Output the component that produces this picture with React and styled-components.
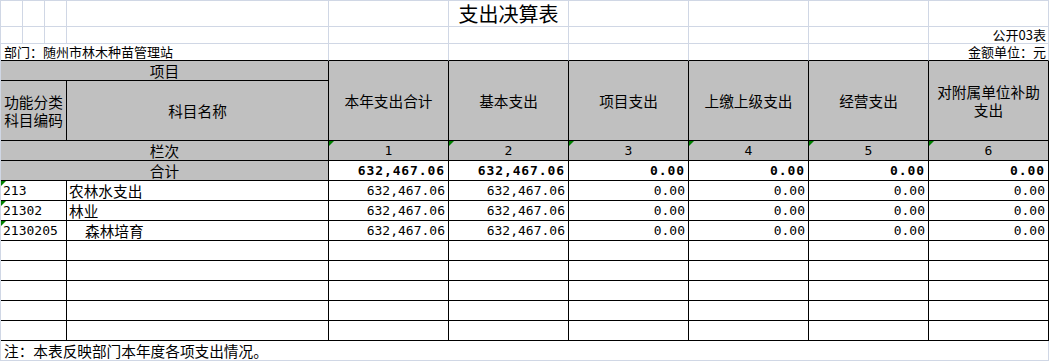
import React from 'react'
import styled, { createGlobalStyle, css } from 'styled-components'

const GlobalStyle = createGlobalStyle`
  html, body {
    margin: 0;
    padding: 0;
    background: #ffffff;
  }
  body {
    font-family: "Noto Sans CJK SC", "Noto Sans", sans-serif;
    color: #000;
  }
`

const GRID = '#d0d7e5'
const LINE = '#000000'
const HEAD = '#c0c0c0'

const Sheet = styled.div`
  display: grid;
  grid-template-columns: 22px 22px 22px 262px repeat(6, 120px);
  grid-template-rows: 26px 17px 17px 20px 60px repeat(10, 20px) 20px;
  width: 1048px;
  border-top: 1px solid ${GRID};
  border-left: 1px solid ${GRID};
`

const Plain = styled.div`
  box-sizing: border-box;
  grid-column: span ${p => p.$span || 1};
  border-right: 1px solid ${GRID};
  border-bottom: 1px solid ${p => (p.$edge ? LINE : GRID)};
  display: flex;
  align-items: center;
  justify-content: ${p => p.$align || 'flex-start'};
  padding: 0 2px 0 3px;
  font-size: 13px;
  line-height: 16px;
  white-space: nowrap;
  overflow: visible;
`

const Title = styled(Plain)`
  font-size: 20px;
  line-height: 24px;
  align-items: flex-end;
  justify-content: center;
  padding: 0;
`

const Cell = styled.div`
  position: relative;
  box-sizing: border-box;
  grid-column: span ${p => p.$span || 1};
  grid-row: span ${p => p.$rows || 1};
  border-right: 1px solid ${LINE};
  border-bottom: 1px solid ${LINE};
  background: ${p => (p.$head ? HEAD : '#ffffff')};
  display: flex;
  align-items: center;
  justify-content: ${p => p.$align || 'center'};
  text-align: center;
  padding: 0 ${p => (p.$align === 'flex-end' ? '3px' : '4px')} 0
    ${p => (p.$align === 'flex-start' ? '2px' : '4px')};
  font-size: 14.67px;
  line-height: 18px;
  white-space: ${p => (p.$wrap ? 'normal' : 'nowrap')};

  ${p => p.$tight && css`padding: 0;`}
  ${p => p.$indent && css`padding-left: 18px;`}

  ${p => p.$mark && css`
    &::before {
      content: '';
      position: absolute;
      top: 0;
      left: 0;
      border-top: 5px solid #008000;
      border-right: 5px solid transparent;
    }
  `}
`

const Num = styled.span`
  font-family: "DejaVu Sans Mono", "Liberation Mono", monospace;
  font-size: 13px;
  font-weight: ${p => (p.$bold ? 700 : 400)};
  letter-spacing: ${p => (p.$bold ? '0.9px' : '0')};
`

const Footer = styled.div`
  grid-column: span 10;
  box-sizing: border-box;
  border-right: 1px solid ${GRID};
  border-bottom: 1px solid ${GRID};
  display: flex;
  align-items: center;
  padding-left: 3px;
  font-size: 14.67px;
  white-space: nowrap;
`

const heads = ['本年支出合计', '基本支出', '项目支出', '上缴上级支出', '经营支出', '对附属单位补助支出']

const rows = [
  { code: '213', name: '农林水支出', vals: ['632,467.06', '632,467.06', '0.00', '0.00', '0.00', '0.00'] },
  { code: '21302', name: '林业', vals: ['632,467.06', '632,467.06', '0.00', '0.00', '0.00', '0.00'] },
  { code: '2130205', name: '森林培育', indent: true, vals: ['632,467.06', '632,467.06', '0.00', '0.00', '0.00', '0.00'] },
]

const totals = ['632,467.06', '632,467.06', '0.00', '0.00', '0.00', '0.00']

const App = () => {
  return (
    <>
      <GlobalStyle />
      <Sheet>
        {/* sheet rows above the table */}
        <Plain /><Plain /><Plain /><Plain /><Plain />
        <Title>支出决算表</Title>
        <Plain /><Plain /><Plain /><Plain />

        <Plain /><Plain /><Plain /><Plain /><Plain />
        <Plain /><Plain /><Plain /><Plain />
        <Plain $align="flex-end">公开03表</Plain>

        <Plain $span={4} $edge>部门：随州市林木种苗管理站</Plain>
        <Plain $edge /><Plain $edge /><Plain $edge /><Plain $edge /><Plain $edge />
        <Plain $edge $align="flex-end">金额单位：元</Plain>

        {/* header */}
        <Cell $head $span={4}>项目</Cell>
        {heads.map(h => (
          <Cell key={h} $head $rows={2} $wrap>{h}</Cell>
        ))}
        <Cell $head $span={3} $wrap $tight>功能分类科目编码</Cell>
        <Cell $head>科目名称</Cell>

        <Cell $head $span={4}>栏次</Cell>
        {heads.map((h, i) => (
          <Cell key={h} $head $mark><Num>{i + 1}</Num></Cell>
        ))}

        <Cell $head $span={4}>合计</Cell>
        {totals.map((v, i) => (
          <Cell key={i} $align="flex-end"><Num $bold>{v}</Num></Cell>
        ))}

        {rows.map(r => (
          <React.Fragment key={r.code}>
            <Cell $span={3} $align="flex-start" $mark><Num>{r.code}</Num></Cell>
            <Cell $align="flex-start" $indent={r.indent}>{r.name}</Cell>
            {r.vals.map((v, i) => (
              <Cell key={i} $align="flex-end"><Num>{v}</Num></Cell>
            ))}
          </React.Fragment>
        ))}

        {[0, 1, 2, 3, 4].map(k => (
          <React.Fragment key={k}>
            <Cell $span={3} /><Cell />
            <Cell /><Cell /><Cell /><Cell /><Cell /><Cell />
          </React.Fragment>
        ))}

        <Footer>注：本表反映部门本年度各项支出情况。</Footer>
      </Sheet>
    </>
  )
}

export default App
